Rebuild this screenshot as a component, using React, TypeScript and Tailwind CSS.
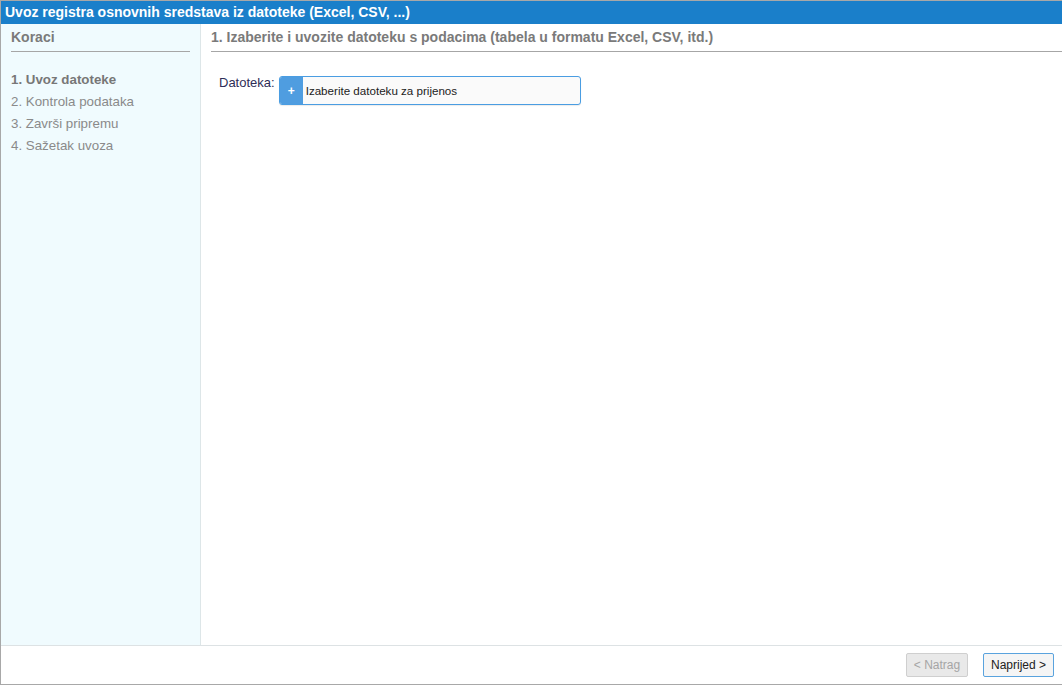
import React from "react";

const steps = [
  { label: "1. Uvoz datoteke", active: true },
  { label: "2. Kontrola podataka", active: false },
  { label: "3. Završi pripremu", active: false },
  { label: "4. Sažetak uvoza", active: false },
];

export default function App() {
  return (
    <div
      className="flex h-[685px] w-[1062px] flex-col border-y border-l border-[#a8a8a8] bg-white"
      style={{ fontFamily: '"Liberation Sans", Arial, sans-serif' }}
    >
      {/* title bar */}
      <div className="flex h-[23px] items-center bg-[#1a7fca] pl-[4px] text-[14px] font-bold text-white">
        Uvoz registra osnovnih sredstava iz datoteke (Excel, CSV, ...)
      </div>

      <div className="flex min-h-0 flex-1">
        {/* steps sidebar */}
        <aside className="w-[200px] shrink-0 border-r border-[#dde6e8] bg-[#f0fbfe] px-[10px] pt-[5px]">
          <h2 className="border-b border-[#a6a6a6] pb-[5px] text-[14px] font-bold leading-[17px] text-[#7a7a7a]">
            Koraci
          </h2>
          <ul className="mt-[17px] flex flex-col text-[13.33px] leading-[22px] text-[#8a8a8a]">
            {steps.map((s) => (
              <li key={s.label} className={s.active ? "font-bold text-[#777]" : ""}>
                {s.label}
              </li>
            ))}
          </ul>
        </aside>

        {/* content */}
        <main className="flex-1 pl-[10px] pt-[5px]">
          <h2 className="border-b border-[#a6a6a6] pb-[5px] text-[14px] font-bold leading-[17px] text-[#7a7a7a]">
            1. Izaberite i uvozite datoteku s podacima (tabela u formatu Excel, CSV, itd.)
          </h2>
          <div className="mt-[24px] flex items-start pl-[8px]">
            <label className="mr-[4px] text-[13px] leading-[14px] text-[#2e2e57]">
              Datoteka:
            </label>
            <div className="flex h-[29px] w-[302px] overflow-hidden rounded-[3px] border border-[#4a9de2] bg-[#fafafa] shadow-[0_1px_1px_rgba(0,0,0,0.08)]">
              <span className="flex w-[23px] items-center justify-center bg-[#4f9de0] text-[12px] font-bold text-white">
                +
              </span>
              <span className="flex items-center pl-[3px] text-[11.6px] text-[#222]">
                Izaberite datoteku za prijenos
              </span>
            </div>
          </div>
        </main>
      </div>

      {/* footer */}
      <div className="flex h-[39px] shrink-0 items-center justify-end gap-[15px] border-t border-[#dde2e4] pr-[8px]">
        <button
          disabled
          className="h-[24px] w-[62px] rounded-[2px] border border-[#cfcfcf] bg-[#e9e9e9] text-[12px] text-[#a5a5a5]"
        >
          &lt; Natrag
        </button>
        <button className="h-[24px] w-[71px] rounded-[2px] border border-[#5aa3de] bg-[#f5f5f5] text-[12px] text-[#222]">
          Naprijed &gt;
        </button>
      </div>
    </div>
  );
}
